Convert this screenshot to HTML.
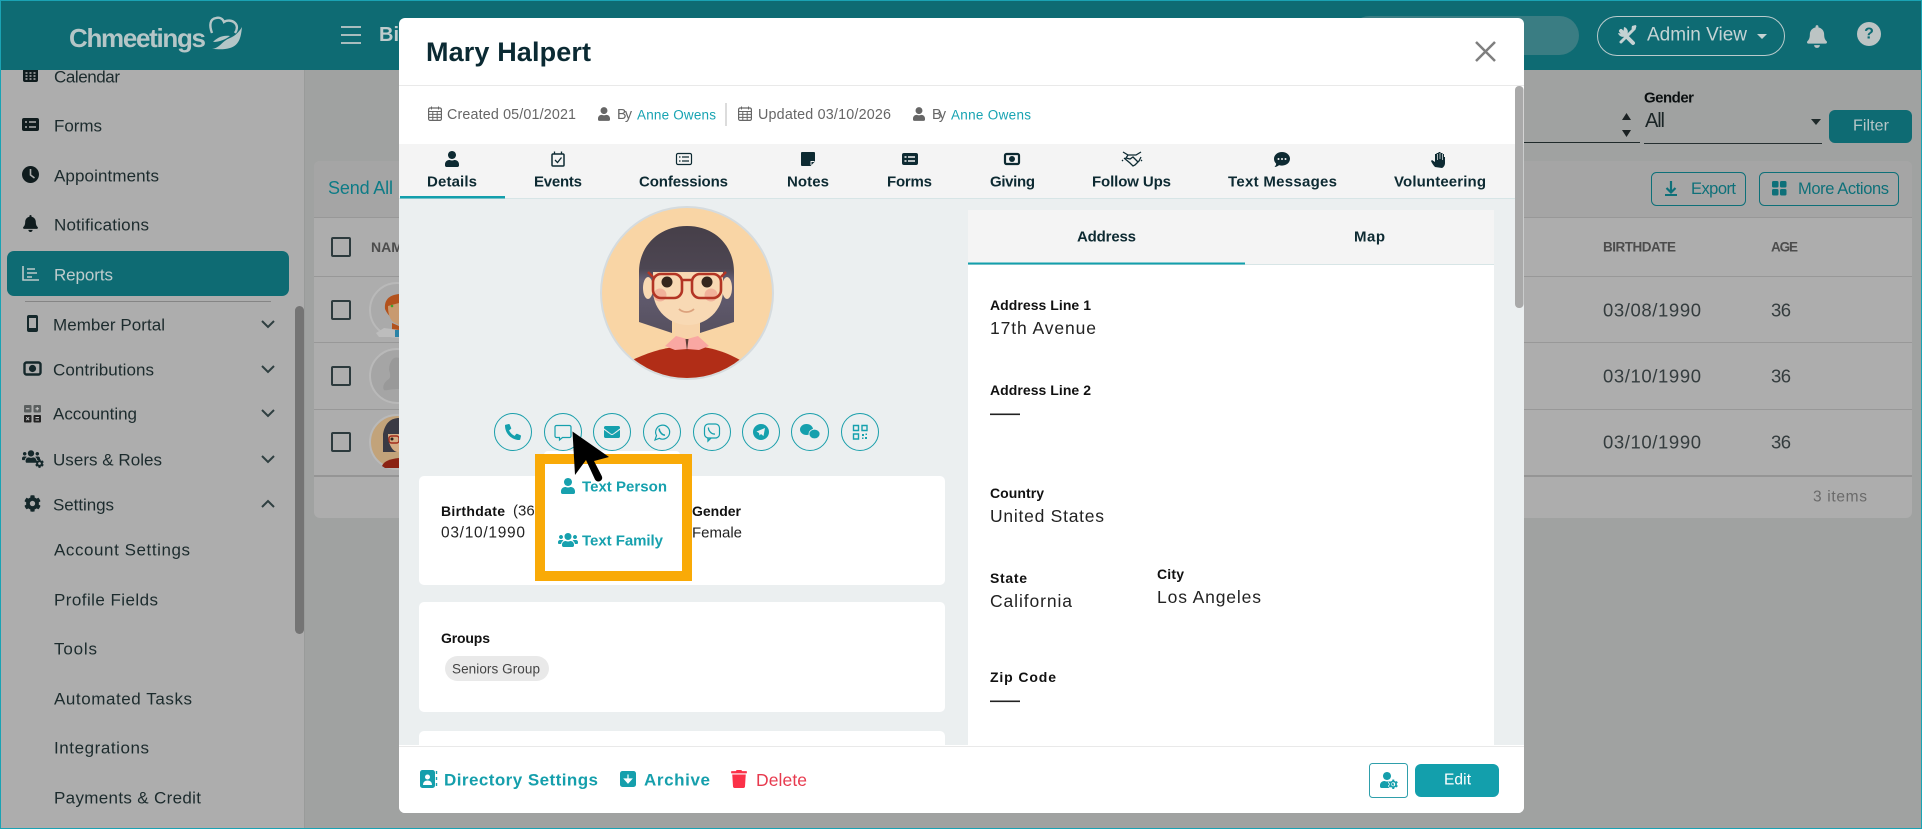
<!DOCTYPE html>
<html><head><meta charset="utf-8"><title>Mary Halpert</title>
<style>
html,body{margin:0;padding:0;background:#a0a2a1;width:1922px;height:829px;overflow:hidden}
svg{display:block}
text{font-family:"Liberation Sans",sans-serif;dominant-baseline:central;transform:translateY(1px)}
.s{font-size:17px;fill:#1c2b2d}
.t{font-size:15px;font-weight:700;fill:#0d2a32}
.m{font-size:14.3px;fill:#666}
.a{font-size:13.5px;fill:#17a3b2}
.l{font-size:14px;font-weight:700;fill:#111}
.v{font-size:17.5px;fill:#222}
.h{font-size:14px;font-weight:700;fill:#4c4c4c}
.r{font-size:18.5px;fill:#343c3e}
.ck{fill:none;stroke:#2c3a3d;stroke-width:2}
.ch{fill:none;stroke:#2f3f41;stroke-width:2}
.c{fill:none;stroke:#1a9fab;stroke-width:1}
</style></head><body>
<svg width="1922" height="829" viewBox="0 0 1922 829" xmlns="http://www.w3.org/2000/svg">
<defs>
<path id="user" d="M224 256c70.7 0 128-57.3 128-128S294.7 0 224 0 96 57.3 96 128s57.3 128 128 128zm89.6 32h-16.7c-22.2 10.2-46.9 16-72.9 16s-50.6-5.8-72.9-16h-16.7C60.2 288 0 348.2 0 422.4V464c0 26.5 21.5 48 48 48h352c26.5 0 48-21.5 48-48v-41.6c0-74.2-60.2-134.4-134.4-134.4z"/>
<path id="users" d="M96 224c35.3 0 64-28.7 64-64s-28.7-64-64-64-64 28.7-64 64 28.7 64 64 64zm448 0c35.3 0 64-28.7 64-64s-28.7-64-64-64-64 28.7-64 64 28.7 64 64 64zm32 32h-64c-17.6 0-33.5 7.1-45.1 18.6 40.3 22.1 68.9 62 75.1 109.4h66c17.7 0 32-14.3 32-32v-32c0-35.3-28.7-64-64-64zm-256 0c61.9 0 112-50.1 112-112S381.9 32 320 32 208 82.1 208 144s50.1 112 112 112zm76.8 32h-8.3c-20.8 10-43.9 16-68.5 16s-47.6-6-68.5-16h-8.3C179.6 288 128 339.6 128 403.2V432c0 26.5 21.5 48 48 48h288c26.5 0 48-21.5 48-48v-28.8c0-63.6-51.6-115.2-115.2-115.2zm-223.7-13.4C161.5 263.1 145.6 256 128 256H64c-35.3 0-64 28.7-64 64v32c0 17.7 14.3 32 32 32h65.9c6.3-47.4 34.9-87.3 75.2-109.4z"/>
<path id="bell" d="M224 512c35.32 0 63.97-28.65 63.97-64H160.03c0 35.35 28.65 64 63.97 64zm215.39-149.71c-19.32-20.76-55.47-51.99-55.47-154.29 0-77.7-54.48-139.9-127.94-155.16V32c0-17.67-14.32-32-31.98-32s-31.98 14.33-31.98 32v20.84C118.56 68.1 64.08 130.3 64.08 208c0 102.3-36.15 133.53-55.47 154.29-6 6.45-8.66 14.16-8.61 21.71.11 16.4 12.98 32 32.1 32h383.8c19.12 0 32-15.6 32.1-32 .05-7.55-2.61-15.27-8.61-21.71z"/>
<path id="cog" d="M487.4 315.7l-42.6-24.6c4.3-23.2 4.3-47 0-70.2l42.6-24.6c4.9-2.8 7.1-8.6 5.5-14-11.1-35.6-30-67.8-54.7-94.6-3.8-4.1-10-5.1-14.8-2.3L380.8 110c-17.9-15.4-38.5-27.3-60.8-35.1V25.8c0-5.6-3.9-10.5-9.4-11.7-36.7-8.2-74.3-7.8-109.2 0-5.5 1.2-9.4 6.1-9.4 11.7V75c-22.2 7.9-42.8 19.8-60.8 35.1L88.7 85.5c-4.9-2.8-11-1.9-14.8 2.3-24.7 26.7-43.6 58.9-54.7 94.6-1.7 5.4.6 11.2 5.5 14L67.3 221c-4.3 23.2-4.3 47 0 70.2l-42.6 24.6c-4.9 2.8-7.1 8.6-5.5 14 11.1 35.6 30 67.8 54.7 94.6 3.8 4.1 10 5.1 14.8 2.3l42.6-24.6c17.9 15.4 38.5 27.3 60.8 35.1v49.2c0 5.6 3.9 10.5 9.4 11.7 36.7 8.2 74.3 7.8 109.2 0 5.5-1.2 9.4-6.1 9.4-11.7v-49.2c22.2-7.9 42.8-19.8 60.8-35.1l42.6 24.6c4.9 2.8 11 1.9 14.8-2.3 24.7-26.7 43.6-58.9 54.7-94.6 1.5-5.5-.7-11.3-5.6-14.1zM256 336c-44.1 0-80-35.9-80-80s35.9-80 80-80 80 35.9 80 80-35.9 80-80 80z"/>
<g id="cal"><rect x="0.6" y="2" width="12.8" height="12.4" rx="1.5" fill="none" stroke="#666" stroke-width="1.2"/><path d="M0.6 5.5h12.8M3.5 0.5v3M10.5 0.5v3M0.6 8.4h12.8M0.6 11.4h12.8M4.8 5.5v9M9.2 5.5v9" stroke="#666" stroke-width="1" fill="none"/></g>
<clipPath id="av"><circle cx="687" cy="293" r="85"/></clipPath>
<clipPath id="rows"><rect x="360" y="270" width="39" height="210"/></clipPath>
<clipPath id="side"><rect x="0" y="70" width="304" height="759"/></clipPath>
<linearGradient id="hair" x1="0" y1="0" x2="0" y2="1"><stop offset="0" stop-color="#463f49"/><stop offset=".4" stop-color="#4d4652"/><stop offset=".5" stop-color="#645e73"/><stop offset="1" stop-color="#56505f"/></linearGradient>
</defs>

<!-- page -->
<rect width="1922" height="829" fill="#a0a2a1"/>
<rect x="0" y="70" width="304" height="759" fill="#adadad"/>
<rect x="304" y="70" width="1" height="759" fill="#999b9a"/>

<!-- sidebar -->
<g clip-path="url(#side)">
<rect x="23" y="68" width="15" height="14" rx="2" fill="#101c1e"/>
<path d="M25.5 73h2M29.5 73h2M33.5 73h2M25.5 76h2M29.5 76h2M33.5 76h2M25.5 79h2M29.5 79h2M33.5 79h2" stroke="#adadad" stroke-width="1.4"/>
<text class="s" x="54" y="76" textLength="66">Calendar</text>
<rect x="22" y="118" width="17" height="13" rx="2" fill="#101c1e"/>
<path d="M25 122h2M25 127h2M29 122h7M29 127h7" stroke="#adadad" stroke-width="1.6"/>
<text class="s" x="54" y="125" textLength="48">Forms</text>
<circle cx="30.5" cy="174.5" r="8.5" fill="#101c1e"/><path d="M30.5 169v6l4 3" stroke="#adadad" stroke-width="1.6" fill="none"/>
<text class="s" x="54" y="175" textLength="105">Appointments</text>
<svg x="23" y="215" width="15" height="17" viewBox="0 0 448 512" fill="#101c1e"><use href="#bell"/></svg>
<text class="s" x="54" y="224" textLength="95">Notifications</text>
<rect x="7" y="251" width="282" height="45" rx="7" fill="#0e6b73"/>
<path d="M23 266v14h16M27 269h8M27 273h10M27 277h5" stroke="#bccaca" stroke-width="1.6" fill="none"/>
<text class="s" x="54" y="274" textLength="59" style="fill:#bfcccd">Reports</text>
<rect x="25" y="301" width="246" height="1" fill="#858585"/>
<rect x="27" y="315" width="11" height="17" rx="2" fill="#15282b"/><rect x="29" y="318" width="7" height="10" fill="#adadad"/>
<text class="s" x="53" y="324" textLength="112">Member Portal</text>
<path class="ch" d="M262 321l6 6 6-6"/>
<rect x="24.5" y="362.5" width="16" height="12" rx="2" fill="none" stroke="#15282b" stroke-width="2.4"/><circle cx="32.5" cy="368.5" r="3.6" fill="#15282b"/>
<text class="s" x="53" y="369" textLength="101">Contributions</text>
<path class="ch" d="M262 366l6 6 6-6"/>
<rect x="24" y="405" width="7.500" height="7.500" rx="1" fill="#5b5f5f"/><rect x="33.500" y="405" width="7.500" height="7.500" rx="1" fill="#5b5f5f"/><rect x="24" y="415" width="7.500" height="7.500" rx="1" fill="#222"/><rect x="33.500" y="415" width="7.500" height="7.500" rx="1" fill="#222"/>
<path d="M26 408.800h3.500M35.500 408.800h3.500M37.200 407v3.500M26.200 417.200l3 3M29.200 417.200l-3 3M35.500 417.500h3.500M35.500 420h3.500" stroke="#ccc" stroke-width="1"/>
<text class="s" x="53" y="413" textLength="84">Accounting</text>
<path class="ch" d="M262 410l6 6 6-6"/>
<svg x="22" y="449" width="18" height="15" viewBox="0 0 640 512" fill="#15282b"><use href="#users"/></svg>
<svg x="35" y="459" width="9" height="9" viewBox="0 0 512 512" fill="#15282b"><use href="#cog"/></svg>
<text class="s" x="53" y="459" textLength="109">Users &amp; Roles</text>
<path class="ch" d="M262 456l6 6 6-6"/>
<svg x="24" y="495" width="17" height="17" viewBox="0 0 512 512" fill="#15282b"><use href="#cog"/></svg>
<text class="s" x="53" y="504" textLength="61">Settings</text>
<path class="ch" d="M262 507l6-6 6 6"/>
<text class="s" x="54" y="549" textLength="136">Account Settings</text>
<text class="s" x="54" y="599" textLength="104">Profile Fields</text>
<text class="s" x="54" y="648" textLength="43">Tools</text>
<text class="s" x="54" y="698" textLength="138">Automated Tasks</text>
<text class="s" x="54" y="747" textLength="95">Integrations</text>
<text class="s" x="54" y="797" textLength="147">Payments &amp; Credit</text>
</g>
<rect x="295" y="306" width="9" height="328" rx="4.500" fill="#747474"/>

<!-- topbar -->
<rect width="1922" height="70" fill="#0e6b73"/>
<text x="69" y="37" font-size="26" font-weight="700" fill="#b5c6c7" textLength="137">Chmeetings</text>
<path d="M212 33c-3-8-2-14 4-15 4-1 7 1 8 4 3-2 8-2 11 1 3 3 2 7 0 10" fill="none" stroke="#b5c6c7" stroke-width="2.400"/>
<path d="M212 49c8-1 10-8 18-11 5-2 9-6 12-11-1 9-2 18-12 21-7 2-12 1-18 1z" fill="#b5c6c7"/>
<path d="M213 42c4-4 9-7 17-6-4 3-10 6-17 6z" fill="#b5c6c7"/>
<path d="M341 27h20M341 35h20M341 43h20" stroke="#bfc9c9" stroke-width="1.800"/>
<text x="379" y="34" font-size="20" font-weight="700" fill="#bfcccd">Bi</text>
<rect x="1350" y="16" width="229" height="39" rx="19.500" fill="#3a7d83"/>
<rect x="1597.500" y="16.500" width="187" height="39" rx="19.500" fill="none" stroke="#b9cbcc" stroke-width="1"/>
<path d="M1621 31l12 12" stroke="#c5d2d3" stroke-width="4" stroke-linecap="round"/>
<path d="M1634 29l-13 13" stroke="#c5d2d3" stroke-width="3" stroke-linecap="round"/>
<path d="M1624 27a5 5 0 1 1-6 6l3 .5 2.500-2.500z" fill="#c5d2d3"/>
<path d="M1632 26l3.500-1 1 1-1 3.500-2.500.5-1.500-1.500z" fill="#c5d2d3"/>
<text x="1647" y="34" font-size="19" fill="#c5d4d5" textLength="100">Admin View</text>
<path d="M1757 34h10l-5 5z" fill="#c5d2d3"/>
<svg x="1807" y="25" width="20" height="23" viewBox="0 0 448 512" fill="#bcc4c4"><use href="#bell"/></svg>
<circle cx="1869" cy="34" r="12" fill="#bcc4c4"/>
<text x="1869" y="33" font-size="16" font-weight="700" fill="#0e6b73" text-anchor="middle">?</text>

<!-- filter -->
<path d="M1622 120h9l-4.500-7zM1622 130h9l-4.500 7z" fill="#1b2223"/>
<rect x="1524" y="142" width="116" height="1" fill="#1f2a2a"/>
<text x="1644" y="97" font-size="15" font-weight="700" fill="#0a0f10" textLength="50">Gender</text>
<text x="1645" y="120" font-size="20" fill="#1b2526" textLength="20">All</text>
<path d="M1811 119h10l-5 6z" fill="#1f2a2a"/>
<rect x="1644" y="143" width="178" height="1" fill="#252f30"/>
<rect x="1829" y="110" width="83" height="33" rx="6" fill="#0e6b73"/>
<text x="1853" y="125" font-size="16" fill="#b6c6c7" textLength="36">Filter</text>

<!-- card -->
<rect x="314" y="161" width="1598" height="357" rx="6" fill="#adadad"/>
<path d="M314 217V167a6 6 0 0 1 6-6H1906a6 6 0 0 1 6 6V217z" fill="#a5a5a5"/>
<text x="328" y="187" font-size="18" fill="#0d7b86" textLength="65">Send All</text>
<rect x="1651.500" y="172.500" width="94" height="33" rx="5" fill="none" stroke="#0e7079"/>
<path d="M1671 181v11M1666.500 188l4.500 4.500 4.500-4.500" stroke="#0e7079" stroke-width="2.200" fill="none"/><rect x="1665" y="194" width="12" height="2" fill="#0e7079"/>
<text x="1691" y="188" font-size="16.500" fill="#0e7079" textLength="45">Export</text>
<rect x="1759.500" y="172.500" width="139" height="33" rx="5" fill="none" stroke="#0e7079"/>
<rect x="1772" y="181" width="6.500" height="6.500" rx="1.500" fill="#0e7079"/><rect x="1780" y="181" width="6.500" height="6.500" rx="1.500" fill="#0e7079"/><rect x="1772" y="189" width="6.500" height="6.500" rx="1.500" fill="#0e7079"/><rect x="1780" y="189" width="6.500" height="6.500" rx="1.500" fill="#0e7079"/>
<text x="1798" y="188" font-size="16.500" fill="#0e7079" textLength="91">More Actions</text>
<rect x="314" y="217" width="1598" height="1" fill="#989898"/>
<rect x="314" y="276" width="1598" height="1" fill="#989898"/>
<rect x="314" y="342" width="1598" height="1" fill="#989898"/>
<rect x="314" y="409" width="1598" height="1" fill="#989898"/>
<rect x="314" y="475" width="1598" height="2" fill="#959595"/>
<rect class="ck" x="332" y="238" width="18" height="18" rx="1"/>
<rect class="ck" x="332" y="301" width="18" height="18" rx="1"/>
<rect class="ck" x="332" y="367" width="18" height="18" rx="1"/>
<rect class="ck" x="332" y="433" width="18" height="18" rx="1"/>
<text class="h" x="371" y="246">NAME</text>
<g clip-path="url(#rows)">
<circle cx="397" cy="310" r="27" fill="#aaa" stroke="#b9b9b9" stroke-width="2"/>
<path d="M385 309c-1-9 4-14 14-15v25c-6 1-11-3-14-10z" fill="#b3521d"/><path d="M388 306l11-3v22l-6-3c-4-4-5-10-5-16z" fill="#c89a70"/><path d="M392 323l7 3v4h-7z" fill="#b3521d"/><path d="M376 333l8-5 15 2v7h-20z" fill="#bdbdbd"/><rect x="395" y="330" width="4" height="7" fill="#2b83a6"/><circle cx="392" cy="306" r="1.300" fill="#3da52c"/>
<circle cx="397" cy="376" r="27" fill="#a5a5a5" stroke="#b9b9b9" stroke-width="2"/>
<path d="M394 358c3-1 5 0 5 0v31c-9 0-14 2-15 1-2-3 0-8 5-11 2-2 1-6 0-9 0-5 2-10 5-12z" fill="#999"/>
<circle cx="397" cy="442" r="27" fill="#c2a37a" stroke="#b9b9b9" stroke-width="2"/>
<path d="M383 452v-18c2-12 9-16 16-16v34z" fill="#3a3a44"/><path d="M388 434h11v18c-5 1-11-6-11-18z" fill="#d4ac84"/><rect x="389" y="436" width="10" height="7" rx="2.500" fill="none" stroke="#a32d1d" stroke-width="1.400"/><circle cx="392" cy="439" r="1.500" fill="#2b2018"/><path d="M382 466c2-5 8-7 17-8v10h-14z" fill="#8b2213"/>
</g>
<text class="h" x="1603" y="246" textLength="73" style="font-size:13.500px">BIRTHDATE</text>
<text class="h" x="1771" y="246" textLength="27" style="font-size:13.500px">AGE</text>
<text class="r" x="1603" y="309" textLength="98">03/08/1990</text><text class="r" x="1771" y="309" textLength="20">36</text>
<text class="r" x="1603" y="375" textLength="98">03/10/1990</text><text class="r" x="1771" y="375" textLength="20">36</text>
<text class="r" x="1603" y="441" textLength="98">03/10/1990</text><text class="r" x="1771" y="441" textLength="20">36</text>
<text x="1813" y="496" font-size="15.500" fill="#6a6a6a" textLength="54">3 items</text>

<!-- modal -->
<rect x="399" y="18" width="1125" height="795" rx="6" fill="#fff"/>
<text x="426" y="51" font-size="27" font-weight="700" fill="#0b2a33" textLength="165">Mary Halpert</text>
<path d="M1476 42l19 19M1495 42l-19 19" stroke="#7f7f7f" stroke-width="2.500"/>
<rect x="399" y="85" width="1125" height="1" fill="#e9e9e9"/>
<use href="#cal" x="428" y="106"/>
<text class="m" x="447" y="114" textLength="129">Created 05/01/2021</text>
<svg x="598" y="107" width="12" height="14" viewBox="0 0 448 512" fill="#666"><use href="#user"/></svg>
<text class="m" x="617" y="114" textLength="15">By</text>
<text class="a" x="637" y="114" textLength="79">Anne Owens</text>
<rect x="725" y="103" width="2" height="23" fill="#dcdcdc"/>
<use href="#cal" x="738" y="106"/>
<text class="m" x="758" y="114" textLength="133">Updated 03/10/2026</text>
<svg x="913" y="107" width="12" height="14" viewBox="0 0 448 512" fill="#666"><use href="#user"/></svg>
<text class="m" x="932" y="114" textLength="14">By</text>
<text class="a" x="951" y="114" textLength="80">Anne Owens</text>

<rect x="399" y="144" width="1116" height="54" fill="#f4f4f4"/>
<rect x="399" y="198" width="1116" height="1" fill="#d7e5e6"/>
<rect x="400" y="196" width="105" height="2.500" fill="#139fac"/>
<path d="M399 199h1116v546H399z" fill="#ebeff0"/>
<rect x="1515" y="144" width="9" height="601" fill="#ebeff0"/>
<rect x="1515" y="86" width="8.500" height="222" rx="4" fill="#a9a9a9"/>

<!-- tabs -->
<svg x="445" y="151" width="14" height="16" viewBox="0 0 448 512" fill="#0d2a32"><use href="#user"/></svg>
<text class="t" x="427" y="181" textLength="50">Details</text>
<rect x="552" y="154" width="12" height="12" rx="1" fill="none" stroke="#0d2a32" stroke-width="1.500"/><path d="M554.500 151.500v3M561.500 151.500v3M555 160l2.500 2.500 4-5" stroke="#0d2a32" stroke-width="1.300" fill="none"/>
<text class="t" x="534" y="181" textLength="48">Events</text>
<rect x="676.500" y="153.500" width="15" height="11" rx="1.500" fill="none" stroke="#0d2a32" stroke-width="1.200"/><path d="M679 157h1.500M679 161h1.500M682 157h7M682 161h7" stroke="#0d2a32" stroke-width="1.200"/>
<text class="t" x="639" y="181" textLength="89">Confessions</text>
<path d="M802 152h12a1 1 0 0 1 1 1v8.500l-4.500 4.500H802a1 1 0 0 1-1-1v-12a1 1 0 0 1 1-1z" fill="#0d2a32"/><path d="M811 165v-3.500h3.500" fill="none" stroke="#f4f4f4" stroke-width="1"/>
<text class="t" x="787" y="181" textLength="42">Notes</text>
<rect x="902" y="153" width="16" height="12" rx="2" fill="#0d2a32"/><path d="M904.500 157h2M904.500 161h2M908 157h7M908 161h7" stroke="#f4f4f4" stroke-width="1.400"/>
<text class="t" x="887" y="181" textLength="45">Forms</text>
<rect x="1005" y="154" width="14" height="10" rx="1.500" fill="none" stroke="#0d2a32" stroke-width="2.200"/><circle cx="1012" cy="159" r="3" fill="#0d2a32"/>
<text class="t" x="990" y="181" textLength="45">Giving</text>
<path d="M1123 152l5 3h8l5-3M1124 158l6 5 3 3 2-1 4-4 2-4M1128 155l-2 3 4 1 3-2 5 5M1123 160l-1 1M1141 160l1 1" fill="none" stroke="#0d2a32" stroke-width="1.300"/>
<text class="t" x="1092" y="181" textLength="79">Follow Ups</text>
<path d="M1282 152c4.500 0 8 3 8 6.800s-3.500 6.800-8 6.800c-1 0-2-.2-3-.5-1.200 1-2.500 1.800-4.500 1.900.8-.8 1.500-2 1.700-3.300-1.400-1.200-2.200-3-2.200-4.900 0-3.800 3.500-6.800 8-6.800z" fill="#0d2a32"/><circle cx="1278.500" cy="159" r="1" fill="#f4f4f4"/><circle cx="1282" cy="159" r="1" fill="#f4f4f4"/><circle cx="1285.500" cy="159" r="1" fill="#f4f4f4"/>
<path d="M1435 167c-2-2-3-4-4-6l1-1 3 2v-8h1.500v-1h2v-1h2v1h2v1h1.500v3h1v6c0 2-1 4-3 5z" fill="#0d2a32"/><path d="M1437.500 154v6M1440 153v6M1442.500 154v6" stroke="#f4f4f4" stroke-width=".7"/>
<text class="t" x="1228" y="181" textLength="109">Text Messages</text>
<text class="t" x="1394" y="181" textLength="92">Volunteering</text>

<!-- avatar -->
<circle cx="687" cy="293" r="86" fill="#f9d5a5" stroke="#d5dbde" stroke-width="2"/>
<g clip-path="url(#av)">
<path d="M639 322V272c0-26 20-46 48-46s47 20 47 46v50l-34 11v-30h-28v30z" fill="url(#hair)"/>
<rect x="675" y="318" width="24" height="19" fill="#f7d3aa"/>
<ellipse cx="648" cy="288" rx="5" ry="11" fill="#f8d9b4"/><ellipse cx="727" cy="288" rx="5" ry="11" fill="#f8d9b4"/>
<path d="M653 272h70v18c0 21-17 35-35 35s-35-14-35-35z" fill="#f8d9b4"/>
<circle cx="660" cy="295" r="6.500" fill="#f1b29a"/><circle cx="711" cy="295" r="6.500" fill="#f1b29a"/>
<rect x="653" y="274" width="29" height="24" rx="8" fill="none" stroke="#b33524" stroke-width="2.600"/>
<rect x="692" y="274" width="29" height="24" rx="8" fill="none" stroke="#b33524" stroke-width="2.600"/>
<path d="M682 280h10M653 277l-5-5M721 277l5-5" stroke="#b33524" stroke-width="2.600"/>
<circle cx="667" cy="282" r="5.500" fill="#35261c"/><circle cx="707" cy="282" r="5.500" fill="#35261c"/>
<path d="M679 309c4 4 11 4 15 0" stroke="#dca27d" stroke-width="1.800" fill="none"/>
<path d="M632 360c20-9 34-13 54-14 22 0 38 5 54 14l10 30H620z" fill="#b12d17"/>
<path d="M665 346l11-10 11 3 11-3 11 10-10 4-12-1-12 1z" fill="#f9a7a2"/>
<path d="M685.500 339l1.500 12 1.500-12z" fill="#5c3d36"/>
</g>

<!-- contact buttons -->
<circle class="c" cx="513" cy="432" r="18.500"/><circle class="c" cx="563" cy="432" r="18.500"/><circle class="c" cx="612" cy="432" r="18.500"/><circle class="c" cx="662" cy="432" r="18.500"/><circle class="c" cx="712" cy="432" r="18.500"/><circle class="c" cx="761" cy="432" r="18.500"/><circle class="c" cx="810" cy="432" r="18.500"/><circle class="c" cx="860" cy="432" r="18.500"/>
<svg x="505" y="424" width="16" height="16" viewBox="0 0 512 512" fill="#15a0ad"><g transform="translate(512 0) scale(-1 1)"><path d="M493.4 24.6l-104-24c-11.3-2.6-22.9 3.300-27.500 13.900l-48 112c-4.200 9.800-1.400 21.300 6.900 28l60.600 49.600c-36 76.700-98.900 140.500-177.200 177.200l-49.600-60.600c-6.800-8.300-18.200-11.100-28-6.900l-112 48C3.900 366.500-2 378.100.6 389.400l24 104C27.100 504.200 36.700 512 48 512c256.100 0 464-207.500 464-464 0-11.200-7.700-20.900-18.600-23.400z"/></g></svg>
<path d="M556.500 425.500h13a1.500 1.500 0 0 1 1.500 1.500v9a1.500 1.500 0 0 1-1.500 1.500h-7l-3 2.500v-2.500h-3a1.500 1.500 0 0 1-1.500-1.500v-9a1.500 1.500 0 0 1 1.500-1.500z" fill="none" stroke="#15a0ad" stroke-width="1.200"/>
<svg x="604" y="424" width="16" height="16" viewBox="0 0 512 512" fill="#15a0ad"><path d="M502.300 190.800c3.900-3.100 9.700-.2 9.700 4.700V400c0 26.500-21.500 48-48 48H48c-26.500 0-48-21.500-48-48V195.600c0-5 5.700-7.800 9.700-4.700 22.400 17.400 52.100 39.500 154.100 113.600 21.100 15.400 56.700 47.800 92.200 47.600 35.700.3 72-32.800 92.300-47.600 102-74.100 131.600-96.300 154-113.700zM256 320c23.200.4 56.600-29.200 73.400-41.400 132.700-96.300 142.800-104.700 173.400-128.700 5.800-4.500 9.200-11.500 9.200-18.900v-19c0-26.500-21.500-48-48-48H48C21.500 64 0 85.500 0 112v19c0 7.400 3.400 14.300 9.200 18.900 30.600 23.900 40.700 32.400 173.400 128.700 16.800 12.200 50.200 41.800 73.400 41.400z"/></svg>
<path d="M655 440l1.500-4.500a7 7 0 1 1 2.800 2.800z" fill="none" stroke="#15a0ad" stroke-width="1.200"/><path d="M659.500 428.500c-1 2 2.500 7 5.500 6.500" fill="none" stroke="#15a0ad" stroke-width="1.600"/>
<rect x="704.500" y="424" width="15" height="14" rx="4" fill="none" stroke="#15a0ad" stroke-width="1.200"/><path d="M708 438v3l3-3M708.500 427.500c-.5 3 3 7 6.500 6.500" fill="none" stroke="#15a0ad" stroke-width="1.300"/>
<circle cx="761" cy="432" r="8" fill="#15a0ad"/><path d="M756.500 431.500l8.500-3.500-1.500 8-2.500-2-1.500 1.500-.5-2.500z" fill="#ebeff0"/>
<ellipse cx="806.500" cy="429.500" rx="6.500" ry="5.500" fill="#15a0ad"/><ellipse cx="814.500" cy="434" rx="5.500" ry="4.800" fill="#15a0ad" stroke="#ebeff0" stroke-width=".8"/>
<path d="M853.500 425.500h5v5h-5zM862 425.500h5v5h-5zM853.500 434h5v5h-5z" fill="none" stroke="#15a0ad" stroke-width="1.400"/><path d="M862 434h2v2h-2zM865 437h2v2h-2zM862 437.500h1.500v1.500h-1.500zM865.500 433.500h1.500v1.500h-1.500z" fill="#15a0ad"/>

<!-- cards left -->
<rect x="419" y="476" width="526" height="109" rx="5" fill="#fff"/>
<rect x="419" y="602" width="526" height="110" rx="5" fill="#fff"/>
<path d="M419 745v-9a5 5 0 0 1 5-5h516a5 5 0 0 1 5 5v9z" fill="#fff"/>
<text class="l" x="441" y="510" textLength="64">Birthdate</text>
<text x="513" y="510" font-size="15" fill="#222">(36</text>
<text x="441" y="532" font-size="15.500" fill="#222" textLength="84">03/10/1990</text>
<text class="l" x="692" y="510" textLength="49">Gender</text>
<text x="692" y="532" font-size="15" fill="#222" textLength="50">Female</text>
<text class="l" x="441" y="637" textLength="49">Groups</text>
<rect x="445" y="656" width="104" height="25" rx="12.500" fill="#e9e9e9"/>
<text x="452" y="668" font-size="13.500" fill="#444" textLength="88">Seniors Group</text>

<!-- dropdown -->
<rect x="544" y="451" width="136" height="10" rx="4" fill="#fff"/>
<rect x="540" y="459" width="147" height="117" fill="#fff" stroke="#f9aa07" stroke-width="10"/>
<svg x="561" y="478" width="14" height="16" viewBox="0 0 448 512" fill="#17a1ae"><use href="#user"/></svg>
<text x="582" y="486" font-size="15" font-weight="700" fill="#17a1ae" textLength="85">Text Person</text>
<svg x="558" y="532" width="20" height="16" viewBox="0 0 640 512" fill="#17a1ae"><use href="#users"/></svg>
<text x="582" y="540" font-size="15" font-weight="700" fill="#17a1ae" textLength="81">Text Family</text>
<path d="M572.500 431.500L575 475l11-15 9 19.500c1.500 2.500 4 2.500 6 1 1.500-1.500 1.500-3 .5-5L594 461l15-4z" fill="#000"/>

<!-- right card -->
<rect x="968" y="210" width="526" height="535" fill="#fff"/>
<rect x="968" y="210" width="526" height="54" fill="#f4f4f4"/>
<rect x="968" y="264" width="526" height="1" fill="#d7e5e6"/>
<rect x="968" y="262.500" width="277" height="2" fill="#139fac"/>
<text class="t" x="1077" y="236" textLength="59">Address</text>
<text class="t" x="1354" y="236" textLength="31">Map</text>
<text class="l" x="990" y="304" textLength="101">Address Line 1</text>
<text class="v" x="990" y="327" textLength="106">17th Avenue</text>
<text class="l" x="990" y="389" textLength="101">Address Line 2</text>
<rect x="990" y="413.500" width="30" height="1.600" fill="#222"/>
<text class="l" x="990" y="492" textLength="54">Country</text>
<text class="v" x="990" y="515" textLength="114">United States</text>
<text class="l" x="990" y="577" textLength="37">State</text>
<text class="v" x="990" y="600" textLength="82">California</text>
<text class="l" x="1157" y="573" textLength="27">City</text>
<text class="v" x="1157" y="596" textLength="104">Los Angeles</text>
<text class="l" x="990" y="676" textLength="66">Zip Code</text>
<rect x="990" y="700.500" width="30" height="1.600" fill="#222"/>

<!-- footer -->
<path d="M399 746H1524V807a6 6 0 0 1-6 6H405a6 6 0 0 1-6-6z" fill="#fff"/>
<rect x="399" y="746" width="1125" height="1" fill="#e9e9e9"/>
<rect x="420" y="770" width="15" height="18" rx="2.500" fill="#159fac"/><circle cx="427.500" cy="777" r="2.500" fill="#fff"/><path d="M423 785c0-3 2-4.500 4.500-4.500s4.500 1.500 4.500 4.500z" fill="#fff"/><path d="M436.500 771v3M436.500 777v3M436.500 783v3" stroke="#159fac" stroke-width="1.400"/>
<text x="444" y="779" font-size="17" font-weight="700" fill="#159fac" textLength="154">Directory Settings</text>
<rect x="620" y="771" width="16" height="16" rx="2.500" fill="#159fac"/><path d="M628 774.500v7M624.500 779l3.500 4 3.500-4z" fill="#fff" stroke="#fff" stroke-width="1.200"/>
<text x="644" y="779" font-size="17" font-weight="700" fill="#159fac" textLength="66">Archive</text>
<svg x="731" y="770" width="16" height="18" viewBox="0 0 448 512" fill="#fb3148"><path d="M432 32H312l-9.400-18.700A24 24 0 0 0 281.100 0H166.800a23.720 23.720 0 0 0-21.400 13.300L136 32H16A16 16 0 0 0 0 48v32a16 16 0 0 0 16 16h416a16 16 0 0 0 16-16V48a16 16 0 0 0-16-16zM53.200 467a48 48 0 0 0 47.900 45h245.800a48 48 0 0 0 47.900-45L416 128H32z"/></svg>
<text x="756" y="779" font-size="17.500" fill="#e73a4e" textLength="51">Delete</text>
<rect x="1369.500" y="763.500" width="38" height="34" rx="3" fill="#fff" stroke="#2f9fab"/>
<svg x="1380" y="772" width="14" height="16" viewBox="0 0 448 512" fill="#159fac"><use href="#user"/></svg>
<svg x="1388" y="779" width="10.500" height="10.500" viewBox="0 0 512 512" fill="#159fac" stroke="#fff" stroke-width="30"><use href="#cog"/></svg>
<rect x="1415" y="764" width="84" height="33" rx="6" fill="#139fac"/>
<text x="1444" y="779" font-size="15.500" fill="#fff" textLength="27">Edit</text>

<!-- page border -->
<rect x="0" y="0" width="1922" height="1" fill="#1aa3b4"/>
<rect x="0" y="828" width="1922" height="1" fill="#1aa3b4"/>
<rect x="0" y="0" width="1" height="829" fill="#1aa3b4"/>
<rect x="1921" y="0" width="1" height="829" fill="#1aa3b4"/>
</svg>
</body></html>
